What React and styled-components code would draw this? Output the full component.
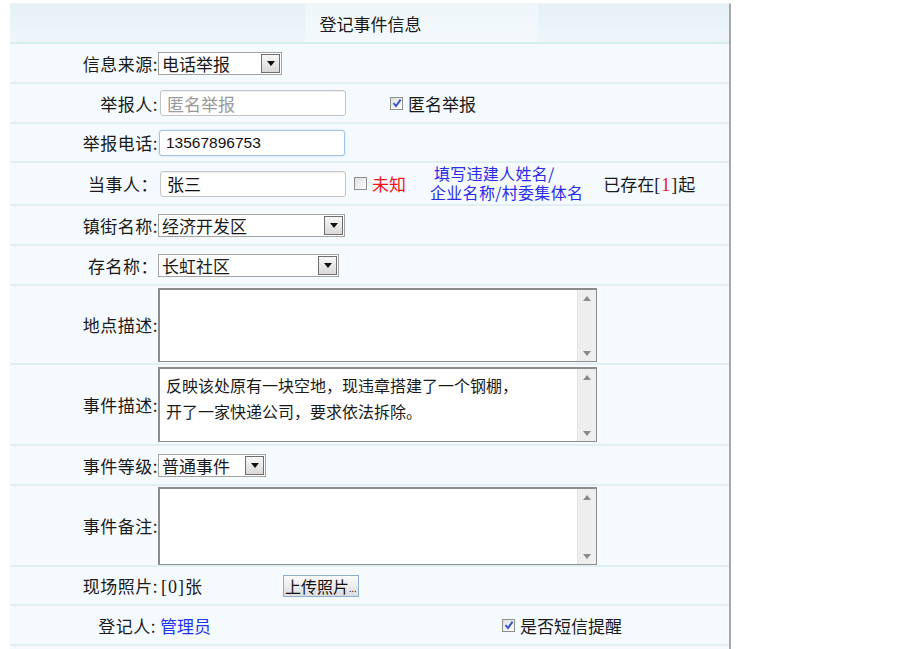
import React from 'react';
import styled, {createGlobalStyle} from "styled-components";

const Global = createGlobalStyle`
    html, body {
        margin: 0;
        padding: 0;
        background: #fff;
    }
    body {
        font-family: "Noto Sans CJK SC", "Liberation Sans", sans-serif;
        font-size: 17px;
        color: #1a1a1a;
    }
`;

const Panel = styled.div`
    margin: 3px 0 0 10px;
    width: 721px;
    min-height: 646px;
    box-sizing: border-box;
    border-right: 2px solid #a8a8a8;
    border-top: 1px solid #edf4f7;
    background: #f5faff;
`;

const Header = styled.div`
    height: 40px;
    box-sizing: border-box;
    border-bottom: 2px solid #d9ecf0;
    display: flex;
    align-items: center;
    justify-content: center;
    padding-left: 2px;
    background:
        linear-gradient(to right, transparent 295px, rgba(255,255,255,0.35) 295px, rgba(255,255,255,0.35) 528px, transparent 528px),
        linear-gradient(#e6f1f6, #e9f3f7 45%, #eef6fa);
`;

const Row = styled.div`
    display: grid;
    grid-template-columns: 148px 1fr;
    align-items: center;
    height: ${p => p.$h || 40}px;
    box-sizing: border-box;
    border-bottom: 2px solid #e1eef4;
`;

const Label = styled.div`
    text-align: right;
    white-space: nowrap;
    padding-right: ${p => p.$pad || 0}px;
    letter-spacing: 0.5px;
`;

const Cell = styled.div`
    display: flex;
    align-items: center;
    padding-left: ${p => p.$indent || 0}px;
    white-space: nowrap;
`;

const SelectBox = styled.div`
    width: ${p => p.$w}px;
    height: 23px;
    box-sizing: border-box;
    border: 1px solid #a3a3a3;
    background: #fff;
    display: flex;
    align-items: center;
    justify-content: space-between;
    padding: 0 1px 0 3px;
`;

const Arrow = styled.div`
    width: 19px;
    height: 19px;
    box-sizing: border-box;
    border: 1px solid #6f6f6f;
    background: linear-gradient(#f7f7f7, #d9d9d9);
    display: flex;
    align-items: center;
    justify-content: center;
`;

const TextInput = styled.div`
    width: ${p => p.$w}px;
    height: 26px;
    box-sizing: border-box;
    margin-left: ${p => p.$ml || 0}px;
    border: 1px solid ${p => p.$focus ? "#9dc3e6" : "#c4c4c4"};
    border-radius: 3px;
    box-shadow: ${p => p.$focus ? "0 0 2px #b9d8f2" : "inset 0 1px 1px #eee"};
    background: #fff;
    display: flex;
    align-items: center;
    padding-left: 6px;
    color: ${p => p.$muted ? "#9a9a9a" : "#111"};
    font-family: ${p => p.$num ? '"Liberation Sans", sans-serif' : 'inherit'};
    font-size: ${p => p.$num ? "15.5px" : "17px"};
`;

const TextArea = styled.div`
    width: 439px;
    height: ${p => p.$h}px;
    box-sizing: border-box;
    border: 2px solid #8c8c8c;
    border-right-width: 1px;
    border-bottom-width: 1px;
    background: #fff;
    display: flex;
`;

const AreaText = styled.div`
    flex: 1;
    padding: 3px 0 0 6px;
    line-height: 26px;
    font-size: 16px;
`;

const Scroll = styled.div`
    width: 18px;
    background: #eeeeee;
    border-left: 1px solid #e4e4e4;
    display: flex;
    flex-direction: column;
    justify-content: space-between;
    align-items: center;
    padding: 6px 0 5px;
`;

const Check = styled.div`
    width: 13px;
    height: 13px;
    box-sizing: border-box;
    border: 1px solid #8e8e8e;
    background: linear-gradient(135deg, #e0e0e0, #fdfdfd);
    display: flex;
    align-items: center;
    justify-content: center;
    margin-left: ${p => p.$ml || 0}px;
    margin-right: 5px;
`;

const Red = styled.span`
    color: #f21414;
`;

const Blue = styled.span`
    color: #1f35f0;
`;

const Hint = styled.div`
    color: #2b2bea;
    line-height: 19.5px;
    font-size: 16px;
    letter-spacing: 0.3px;
    margin-left: ${p => p.$ml}px;
    padding-bottom: 1px;
`;

const Counter = styled.div`
    margin-left: ${p => p.$ml}px;
`;

const Bracket = styled.span`
    font-family: "Liberation Serif", serif;
    font-size: 18px;
    letter-spacing: 1px;
`;

const UploadButton = styled.div`
    margin-left: ${p => p.$ml}px;
    width: 76px;
    height: 22px;
    box-sizing: border-box;
    border: 1px solid #8aaed1;
    background: linear-gradient(#fafafa, #dedede);
    display: flex;
    align-items: center;
    padding-left: 1px;
    font-size: 16px;
    color: #111;
`;

const Dots = styled.span`
    font-size: 9px;
    margin-top: 6px;
    color: #333;
`;

const Down = () => (
    <svg width="8" height="5" viewBox="0 0 8 5"><path d="M0 0h8L4 5z" fill="#111"/></svg>
);

const Select = ({w, value}) => (
    <SelectBox $w={w}>
        <span>{value}</span>
        <Arrow><Down/></Arrow>
    </SelectBox>
);

const Tick = () => (
    <svg width="10" height="10" viewBox="0 0 10 10">
        <path d="M1.5 5.2 L4 8 L8.6 1.6" stroke="#3553c9" strokeWidth="1.9" fill="none"/>
    </svg>
);

const Box = ({checked, ml}) => (
    <Check $ml={ml}>{checked && <Tick/>}</Check>
);

const Area = ({h, children}) => (
    <TextArea $h={h}>
        <AreaText>{children}</AreaText>
        <Scroll>
            <svg width="8" height="5" viewBox="0 0 8 5"><path d="M0 5h8L4 0z" fill="#8a8a8a"/></svg>
            <svg width="8" height="5" viewBox="0 0 8 5"><path d="M0 0h8L4 5z" fill="#8a8a8a"/></svg>
        </Scroll>
    </TextArea>
);

const App = () => {
    return (
        <>
            <Global/>
            <Panel>
                <Header>登记事件信息</Header>
                <Row>
                    <Label>信息来源:</Label>
                    <Cell><Select w={124} value="电话举报"/></Cell>
                </Row>
                <Row>
                    <Label>举报人:</Label>
                    <Cell>
                        <TextInput $w={186} $ml={2} $muted>匿名举报</TextInput>
                        <Box checked ml={44}/>
                        <span>匿名举报</span>
                    </Cell>
                </Row>
                <Row $h={39}>
                    <Label>举报电话:</Label>
                    <Cell><TextInput $w={186} $ml={1} $focus $num>13567896753</TextInput></Cell>
                </Row>
                <Row $h={43}>
                    <Label>当事人：</Label>
                    <Cell>
                        <TextInput $w={186} $ml={2}>张三</TextInput>
                        <Box ml={8}/>
                        <Red>未知</Red>
                        <Hint $ml={24}>&nbsp;填写违建人姓名/<br/>企业名称/村委集体名</Hint>
                        <Counter $ml={20}>已存在<Bracket>[<Red>1</Red>]</Bracket>起</Counter>
                    </Cell>
                </Row>
                <Row>
                    <Label>镇街名称:</Label>
                    <Cell><Select w={187} value="经济开发区"/></Cell>
                </Row>
                <Row>
                    <Label>存名称：</Label>
                    <Cell><Select w={181} value="长虹社区"/></Cell>
                </Row>
                <Row $h={79}>
                    <Label>地点描述:</Label>
                    <Cell><Area h={74}/></Cell>
                </Row>
                <Row $h={81}>
                    <Label>事件描述:</Label>
                    <Cell>
                        <Area h={75}>
                            反映该处原有一块空地，现违章搭建了一个钢棚，<br/>开了一家快递公司，要求依法拆除。
                        </Area>
                    </Cell>
                </Row>
                <Row>
                    <Label>事件等级:</Label>
                    <Cell><Select w={108} value="普通事件"/></Cell>
                </Row>
                <Row $h={81}>
                    <Label>事件备注:</Label>
                    <Cell><Area h={78}/></Cell>
                </Row>
                <Row $h={39}>
                    <Label>现场照片:</Label>
                    <Cell $indent={3}>
                        <span><Bracket>[0]</Bracket>张</span>
                        <UploadButton $ml={81}>上传照片<Dots>...</Dots></UploadButton>
                    </Cell>
                </Row>
                <Row $h={40}>
                    <Label $pad={2}>登记人:</Label>
                    <Cell $indent={2}>
                        <Blue>管理员</Blue>
                        <Box checked ml={291}/>
                        <span>是否短信提醒</span>
                    </Cell>
                </Row>
            </Panel>
        </>
    );
};

export default App;
